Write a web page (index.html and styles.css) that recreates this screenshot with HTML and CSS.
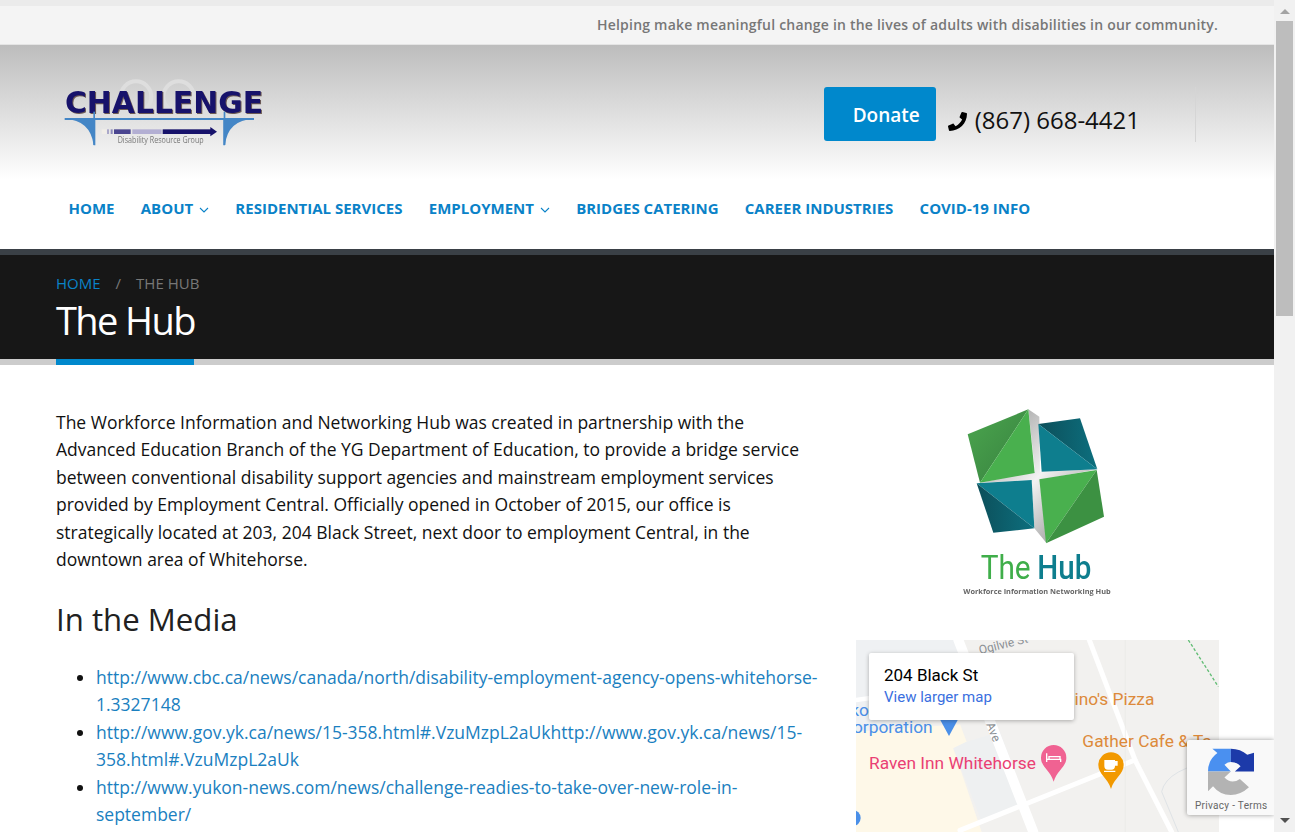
FILE: index.html
```html
<!DOCTYPE html>
<html lang="en">
<head>
  <meta charset="UTF-8" />
  <title>The Hub</title>
  <link rel="stylesheet" href="styles.css">
</head>
<body>
  <div class="page">
    <div class="top-strip"></div>
    <div class="top-bar">Helping make meaningful change in the lives of adults with disabilities in our community.</div>

    <header class="masthead">
      <svg class="logo" viewBox="0 0 690 270" width="230" height="90">
        <circle cx="258" cy="80" r="46" fill="none" stroke="#dedede" stroke-width="12"/>
        <circle cx="386" cy="80" r="46" fill="none" stroke="#dedede" stroke-width="12"/>
        <text x="48" y="132" class="logo-shadow" textLength="594" lengthAdjust="spacingAndGlyphs">CHALLENGE</text>
        <text x="45" y="130" class="logo-word" textLength="594" lengthAdjust="spacingAndGlyphs">CHALLENGE</text>
        <rect x="44" y="144" width="568" height="6" fill="#4486c6"/>
        <rect x="130" y="125" width="5" height="100" fill="#4486c6"/>
        <rect x="521" y="125" width="5" height="100" fill="#4486c6"/>
        <path d="M44 146 Q122 150 131 226 L136 226 V150 Z" fill="#4486c6"/>
        <path d="M612 146 Q532 150 525 226 L520 226 V150 Z" fill="#4486c6"/>
        <rect x="155" y="178" width="15" height="14" fill="#f1eee8"/>
        <rect x="172" y="178" width="4" height="14" fill="#8d89bb"/>
        <rect x="182" y="178" width="6" height="14" fill="#8d89bb"/>
        <rect x="192" y="178" width="50" height="14" fill="#4a4590"/>
        <rect x="247" y="178" width="88" height="14" fill="#b3afd3"/>
        <rect x="338" y="178" width="145" height="14" fill="#17126b"/>
        <path d="M481 171 L501 185 L481 199 Z" fill="#17126b"/>
        <text x="203" y="220" class="logo-sub" textLength="258" lengthAdjust="spacingAndGlyphs">Disability Resource Group</text>
      </svg>
      <div class="head-right">
        <a class="donate">Donate</a>
        <div class="phone">
          <svg viewBox="0 0 512 512" width="19" height="19"><path d="M493.4 24.6l-104-24c-11.3-2.6-22.9 3.3-27.5 13.9l-48 112c-4.2 9.8-1.4 21.3 6.9 28l60.6 49.6c-36 76.7-98.9 140.5-177.2 177.2l-49.6-60.6c-6.8-8.3-18.2-11.1-28-6.9l-112 48C3.9 366.5-2 378.1.6 389.4l24 104C27.1 504.2 36.7 512 48 512c256.1 0 464-207.5 464-464 0-11.2-7.7-20.9-18.6-23.4z" fill="#000"/></svg>
          <span>(867) 668-4421</span>
        </div>
        <div class="head-sep"></div>
      </div>
    </header>

    <nav class="main-nav">
      <a>Home</a>
      <a>About <svg class="chev" viewBox="0 0 10 6" width="10" height="6"><path d="M1 1l4 4 4-4" fill="none" stroke="#0a82c8" stroke-width="1.1"/></svg></a>
      <a>Residential Services</a>
      <a>Employment <svg class="chev" viewBox="0 0 10 6" width="10" height="6"><path d="M1 1l4 4 4-4" fill="none" stroke="#0a82c8" stroke-width="1.1"/></svg></a>
      <a>Bridges Catering</a>
      <a>Career Industries</a>
      <a>COVID-19 Info</a>
    </nav>

    <section class="page-title">
      <div class="crumbs"><a>HOME</a><span class="slash">/</span><span>THE HUB</span></div>
      <h1>The Hub</h1>
    </section>
    <div class="title-rule"><div class="title-rule-bar"></div></div>

    <main class="content">
      <div class="col-main">
        <p>The Workforce Information and Networking Hub was created in partnership with the Advanced Education Branch of the YG Department of Education, to provide a bridge service between conventional disability support agencies and mainstream employment services provided by Employment Central. Officially opened in October of 2015, our office is strategically located at 203, 204 Black Street, next door to employment Central, in the downtown area of Whitehorse.</p>
        <h2>In the Media</h2>
        <ul>
          <li><a>http://www.cbc.ca/news/canada/north/disability-employment-agency-opens-whitehorse-1.3327148</a></li>
          <li><a>http://www.gov.yk.ca/news/15-358.html#.VzuMzpL2aUkhttp://www.gov.yk.ca/news/15-358.html#.VzuMzpL2aUk</a></li>
          <li><a>http://www.yukon-news.com/news/challenge-readies-to-take-over-new-role-in-september/</a></li>
        </ul>
      </div>
      <aside class="col-side">
        <svg class="hub-logo" viewBox="0 0 570 615" width="190" height="205">
          <defs>
            <linearGradient id="g1" x1="0" y1="0" x2="1" y2="1"><stop offset="0" stop-color="#4ba64e"/><stop offset="1" stop-color="#37803f"/></linearGradient>
            <linearGradient id="g2" x1="0" y1="0" x2="1" y2="0"><stop offset="0" stop-color="#0c4f5a"/><stop offset="1" stop-color="#0d6f7e"/></linearGradient>
            <linearGradient id="s1" x1="0" y1="0" x2="1" y2="1"><stop offset="0" stop-color="#8a8a8a"/><stop offset="0.5" stop-color="#f2f2f2"/><stop offset="1" stop-color="#777"/></linearGradient>
          </defs>
          <path d="M265 28 L298 50 L300 215 L472 208 L300 240 L320 430 L283 385 L275 240 L120 248 L285 215 Z" fill="url(#s1)"/>
          <path d="M83 103 L265 28 L120 248 Z" fill="url(#g1)"/>
          <path d="M265 28 L284 219 L120 248 Z" fill="#49b04e"/>
          <path d="M295 72 L420 55 L472 208 Z" fill="url(#g2)"/>
          <path d="M295 72 L472 208 L305 215 Z" fill="#0e7e8e"/>
          <path d="M110 250 L275 240 L283 385 Z" fill="#0e7e8e"/>
          <path d="M110 250 L283 385 L160 398 Z" fill="url(#g2)"/>
          <path d="M298 238 L470 210 L318 430 Z" fill="#49b04e"/>
          <path d="M470 210 L492 350 L318 430 Z" fill="#3c9142"/>
          <text x="122" y="537" class="hub-the" textLength="150" lengthAdjust="spacingAndGlyphs">The</text>
          <text x="292" y="537" class="hub-hub" textLength="162" lengthAdjust="spacingAndGlyphs">Hub</text>
          <text x="70" y="581" class="hub-sub" textLength="442" lengthAdjust="spacingAndGlyphs">Workforce Information Networking Hub</text>
        </svg>

        <div class="map">
          <svg class="map-art" viewBox="18 15 1089 576" width="363" height="192">
            <rect x="18" y="15" width="1089" height="576" fill="#f2f1ef"/>
            <path d="M18 15 H330 L420 230 L18 290 Z" fill="#eff1f3"/>
            <path d="M18 290 L330 268 L350 320 L310 340 L395 591 H18 Z" fill="#fef8e8"/>
            <path d="M310 340 L350 320 L450 290 L530 510 L395 560 Z" fill="#eef0f1"/>
            <g fill="none" stroke="#fff" stroke-linecap="round">
              <path d="M325 15 L550 591" stroke-width="30"/>
              <path d="M18 195 L340 150" stroke-width="14"/>
              <path d="M718 15 L855 375 L965 591" stroke-width="15"/>
              <path d="M330 586 L855 375" stroke-width="15"/>
            </g>
            <path d="M826 15 V591" stroke="#e8e8e6" stroke-width="2"/>
            <path d="M1105 375 Q950 400 935 470 L985 591" fill="none" stroke="#dfe3e6" stroke-width="3"/>
            <path d="M1015 15 L1105 155" stroke="#62bd75" stroke-width="4" stroke-dasharray="9 6" fill="none"/>
            <text x="390" y="58" class="map-road" transform="rotate(-14 390 58)">Ogilvie St</text>
            <text x="408" y="268" class="map-road" transform="rotate(68 408 268)">Ave</text>
            <text x="57" y="242" class="map-biz map-end">ko</text>
            <text x="248" y="293" class="map-biz map-end">orporation</text>
            <path d="M268 250 H326 L297 303 Z" fill="#4a8fe8"/>
            <text x="913" y="210" class="map-food map-end">ino's Pizza</text>
            <text x="697" y="336" class="map-food">Gather Cafe &amp; Ta</text>
            <text x="57" y="402" class="map-hotel">Raven Inn Whitehorse</text>
            <path d="M611 330 a38 38 0 0 1 38 38 c0 28 -28 38 -38 72 c-10 -34 -38 -44 -38 -72 a38 38 0 0 1 38 -38 Z" fill="#f06292"/>
            <path d="M590 355 v26 M590 373 h42 v8 M597 365 h33 v8 h-33 Z" stroke="#fff" stroke-width="4" fill="none"/>
            <path d="M783 352 a38 38 0 0 1 38 38 c0 28 -28 38 -38 72 c-10 -34 -38 -44 -38 -72 a38 38 0 0 1 38 -38 Z" fill="#f29900"/>
            <path d="M765 377 h28 v16 a9 9 0 0 1 -9 9 h-10 a9 9 0 0 1 -9 -9 Z M793 380 h8 v10 h-8 M762 409 h34" stroke="#fff" stroke-width="4" fill="#fff"/>
            <circle cx="8" cy="549" r="24" fill="#4a8fe8"/>
          </svg>
          <div class="map-card">
            <div class="map-card-title">204 Black St</div>
            <a class="map-card-link">View larger map</a>
          </div>
        </div>
      </aside>
    </main>

    <div class="recaptcha">
      <svg viewBox="1075 338 137 140" width="46" height="47">
        <path d="M1075 408 A68 68 0 0 1 1103 353 L1088 340 H1143 V380 Q1132 380 1124 388 L1143 408 Z" fill="#4a90f0"/>
        <path d="M1143 340 Q1172 340 1192 358 L1212 352 V408 H1155 L1172 392 Q1160 380 1143 380 Z" fill="#1c3aa9"/>
        <path d="M1075 408 H1143 L1124 426 Q1145 448 1170 430 L1197 455 Q1172 478 1143 478 Q1110 478 1090 452 L1075 467 Z" fill="#b3b3b3"/>
      </svg>
      <div class="recaptcha-links">Privacy <span>-</span> Terms</div>
    </div>
  </div>

  <div class="scrollbar">
    <div class="arrow-up"></div>
    <div class="thumb"></div>
    <div class="arrow-down"></div>
  </div>
</body>
</html>
```

FILE: styles.css
```css
* {
  box-sizing: border-box;
}
html, body {
  margin: 0;
  height: 832px;
  overflow: hidden;
}
body {
  display: flex;
  font-family: "Open Sans", sans-serif;
  color: #111;
  background: #fff;
}
.page {
  width: 1274px;
  height: 832px;
  overflow: hidden;
  position: relative;
  flex: none;
}
.top-strip {
  height: 6px;
  background: #ebebeb;
}
.top-bar {
  height: 39px;
  padding-right: 56px;
  background: #f4f4f4;
  border-bottom: 1px solid #e4e4e4;
  color: #777;
  font-size: 14px;
  font-weight: 600;
  line-height: 37px;
  text-align: right;
  letter-spacing: 0.21px;
}
.masthead {
  display: flex;
  height: 135px;
  padding: 25px 78px 0 50px;
  background: linear-gradient(#bdbdbd, #fff);
}
.logo {
  display: block;
  flex: none;
  filter: blur(0.4px);
}
.logo-word, .logo-shadow {
  font-family: "DejaVu Sans", sans-serif;
  font-weight: 700;
  font-size: 90px;
  fill: #17126b;
}
.logo-shadow {
  fill: #6d5b55;
}
.logo-sub {
  font-family: "Open Sans", sans-serif;
  font-size: 25px;
  fill: #777;
}
.head-right {
  display: flex;
  align-items: flex-start;
  margin-left: auto;
  padding-top: 17px;
}
.donate {
  width: 112px;
  height: 54px;
  padding-left: 29px;
  background: #0088cc;
  border-radius: 3px;
  color: #fff;
  font-size: 19px;
  font-weight: 600;
  line-height: 56px;
}
.phone {
  display: flex;
  align-items: center;
  gap: 8px;
  margin: 16px 55px 0 12px;
  color: #111;
  font-size: 24px;
  line-height: 34px;
}
.phone svg {
  margin-top: 3px;
}
.head-sep {
  width: 1px;
  height: 55px;
  background: #d5d5d5;
}
.main-nav {
  display: flex;
  gap: 26.3px;
  height: 69px;
  padding: 16px 0 0 68.5px;
  background: #fff;
  font-size: 15px;
  font-weight: 700;
  text-transform: uppercase;
  line-height: 24px;
}
.main-nav a {
  color: #0a82c8;
  white-space: nowrap;
}
.chev {
  margin-left: 2px;
  vertical-align: 1px;
}
.page-title {
  height: 110px;
  padding: 16px 56px 0;
  background: #171717;
  border-top: 6px solid #3a4046;
  color: #fff;
}
.crumbs {
  color: #777;
  font-size: 15px;
  line-height: 24px;
}
.crumbs a {
  color: #0a82c8;
}
.slash {
  margin: 0 15px;
}
.page-title h1 {
  margin: 0;
  font-size: 38px;
  font-weight: 400;
  line-height: 50px;
  letter-spacing: -1.6px;
}
.title-rule {
  height: 6px;
  padding-left: 56px;
  background: #ccc;
}
.title-rule-bar {
  width: 138px;
  height: 6px;
  background: #0088cc;
}
.content {
  display: grid;
  grid-template-columns: 764px 363px;
  gap: 36px;
  padding: 43.7px 0 0 56px;
}
.col-main p {
  margin: 0;
  font-size: 17.5px;
  line-height: 27.5px;
}
.col-main h2 {
  margin: 25.3px 0 25px;
  color: #212121;
  font-size: 31.2px;
  font-weight: 400;
  line-height: 40px;
}
.col-main ul {
  margin: 0;
  padding-left: 40px;
  font-size: 17.5px;
  line-height: 27.5px;
}
.col-main a {
  color: #1a80c0;
}
.hub-logo {
  display: block;
  margin: -8.7px 0 35px 84px;
  filter: blur(0.3px);
}
.hub-the, .hub-hub {
  font-family: "Roboto", sans-serif;
  font-size: 100px;
  fill: #3fae4a;
}
.hub-hub {
  fill: #0e7e8e;
  font-weight: 500;
}
.hub-sub {
  font-family: "Open Sans", sans-serif;
  font-weight: 700;
  font-size: 23px;
  fill: #666;
}
.map {
  position: relative;
  width: 363px;
  height: 192px;
}
.map-art {
  display: block;
}
.map-road {
  font-family: "Roboto", sans-serif;
  font-size: 36px;
  fill: #8a8f94;
}
.map-biz, .map-food, .map-hotel {
  font-family: "Roboto", sans-serif;
  font-size: 52px;
}
.map-end {
  text-anchor: end;
}
.map-biz {
  fill: #4a8fe8;
}
.map-food {
  fill: #dd8a3a;
}
.map-hotel {
  fill: #ea3f74;
}
.map-card {
  position: absolute;
  left: 13px;
  top: 13px;
  width: 205px;
  height: 67px;
  padding: 11px 15px;
  background: #fff;
  border-radius: 2px;
  box-shadow: 0 1px 4px rgba(0, 0, 0, 0.3);
  font-family: "Roboto", sans-serif;
}
.map-card-title {
  color: #000;
  font-size: 17px;
  font-weight: 400;
  line-height: 23px;
}
.map-card-link {
  display: block;
  color: #3a6fe0;
  font-size: 15px;
  line-height: 21px;
}
.recaptcha {
  position: absolute;
  left: 1187px;
  top: 740px;
  width: 87px;
  height: 75px;
  padding: 8px 0 0 21px;
  background: #f9f9f9;
  border-radius: 2px 0 0 2px;
  box-shadow: 0 0 5px rgba(0, 0, 0, 0.4);
}
.recaptcha svg {
  display: block;
}
.recaptcha-links {
  margin: 5px 0 0 -13px;
  color: #666;
  font-family: "Roboto", sans-serif;
  font-size: 10px;
  letter-spacing: 0.3px;
  line-height: 12px;
  white-space: nowrap;
}
.scrollbar {
  position: relative;
  width: 21px;
  height: 832px;
  background: #f1f1f1;
  padding: 21px 2px 0;
}
.thumb {
  height: 295px;
  background: #bdbdbd;
}
.arrow-up, .arrow-down {
  position: absolute;
  left: 6px;
  width: 0;
  height: 0;
  border-left: 5px solid transparent;
  border-right: 5px solid transparent;
}
.arrow-up {
  top: 9px;
  border-bottom: 5px solid #a3a3a3;
}
.arrow-down {
  bottom: 9px;
  border-top: 5px solid #505050;
}
```
